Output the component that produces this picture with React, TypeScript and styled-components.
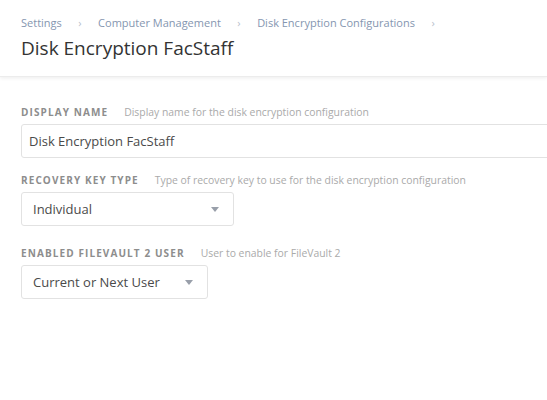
import React from "react";
import styled, { createGlobalStyle } from "styled-components";

const Global = createGlobalStyle`
  html, body { margin: 0; padding: 0; background: #fff; overflow: hidden; }
  body { font-family: "Open Sans", Lato, sans-serif; width: 547px; height: 400px; }
`;

const Header = styled.header`
  background: #fff;
  padding: 14px 21px 0;
  height: 77px;
  box-sizing: border-box;
  box-shadow: 0 1px 4px rgba(0,0,0,0.08);
  border-bottom: 1px solid #ececec;
  position: relative;
  z-index: 1;
`;

const Crumbs = styled.nav`
  display: flex;
  align-items: center;
  font-size: 11px;
  color: #8596b0;
  height: 16px;
`;

const Sep = styled.span`
  color: #b8c0cc;
  margin: 0 16.5px;
  font-size: 11px;
`;

const Title = styled.h1`
  margin: 5px 0 0;
  font-weight: 400;
  font-size: 19px;
  color: #333;
`;

const Body = styled.main`
  padding: 28px 0 0 21px;
  display: flex;
  flex-direction: column;
`;

const Field = styled.section<{ $gap: number }>`
  display: flex;
  flex-direction: column;
  margin-bottom: ${(p) => p.$gap}px;
`;

const LabelRow = styled.div`
  display: flex;
  align-items: baseline;
  height: 14px;
  margin-bottom: 5px;
`;

const Label = styled.span`
  font-size: 10px;
  font-weight: 700;
  letter-spacing: 1.1px;
  color: #8d8d8d;
  text-transform: uppercase;
  margin-right: 16px;
`;

const Desc = styled.span`
  font-size: 10.4px;
  color: #aaa;
`;

const Box = styled.div<{ $w: number }>`
  width: ${(p) => p.$w}px;
  height: 34px;
  box-sizing: border-box;
  border: 1px solid #e2e2e2;
  border-radius: 3px;
  background: #fff;
  display: flex;
  align-items: center;
  font-size: 13px;
  color: #4a4a4a;
`;

const InputText = styled.span`
  padding-left: 7px;
`;

const SelectText = styled.span`
  padding-left: 11px;
  flex: 1;
`;

const Caret = styled.span`
  width: 0;
  height: 0;
  border-left: 4px solid transparent;
  border-right: 4px solid transparent;
  border-top: 5px solid #999faa;
  margin-right: 14px;
`;

export default function App() {
  return (
    <>
      <Global />
      <Header>
        <Crumbs>
          <span>Settings</span>
          <Sep>›</Sep>
          <span>Computer Management</span>
          <Sep>›</Sep>
          <span>Disk Encryption Configurations</span>
          <Sep>›</Sep>
        </Crumbs>
        <Title>Disk Encryption FacStaff</Title>
      </Header>
      <Body>
        <Field $gap={15}>
          <LabelRow>
            <Label>Display Name</Label>
            <Desc>Display name for the disk encryption configuration</Desc>
          </LabelRow>
          <Box $w={560}>
            <InputText>Disk Encryption FacStaff</InputText>
          </Box>
        </Field>
        <Field $gap={20}>
          <LabelRow>
            <Label>Recovery Key Type</Label>
            <Desc>Type of recovery key to use for the disk encryption configuration</Desc>
          </LabelRow>
          <Box $w={213}>
            <SelectText>Individual</SelectText>
            <Caret />
          </Box>
        </Field>
        <Field $gap={20}>
          <LabelRow>
            <Label>Enabled FileVault 2 User</Label>
            <Desc>User to enable for FileVault 2</Desc>
          </LabelRow>
          <Box $w={187}>
            <SelectText>Current or Next User</SelectText>
            <Caret />
          </Box>
        </Field>
      </Body>
    </>
  );
}
